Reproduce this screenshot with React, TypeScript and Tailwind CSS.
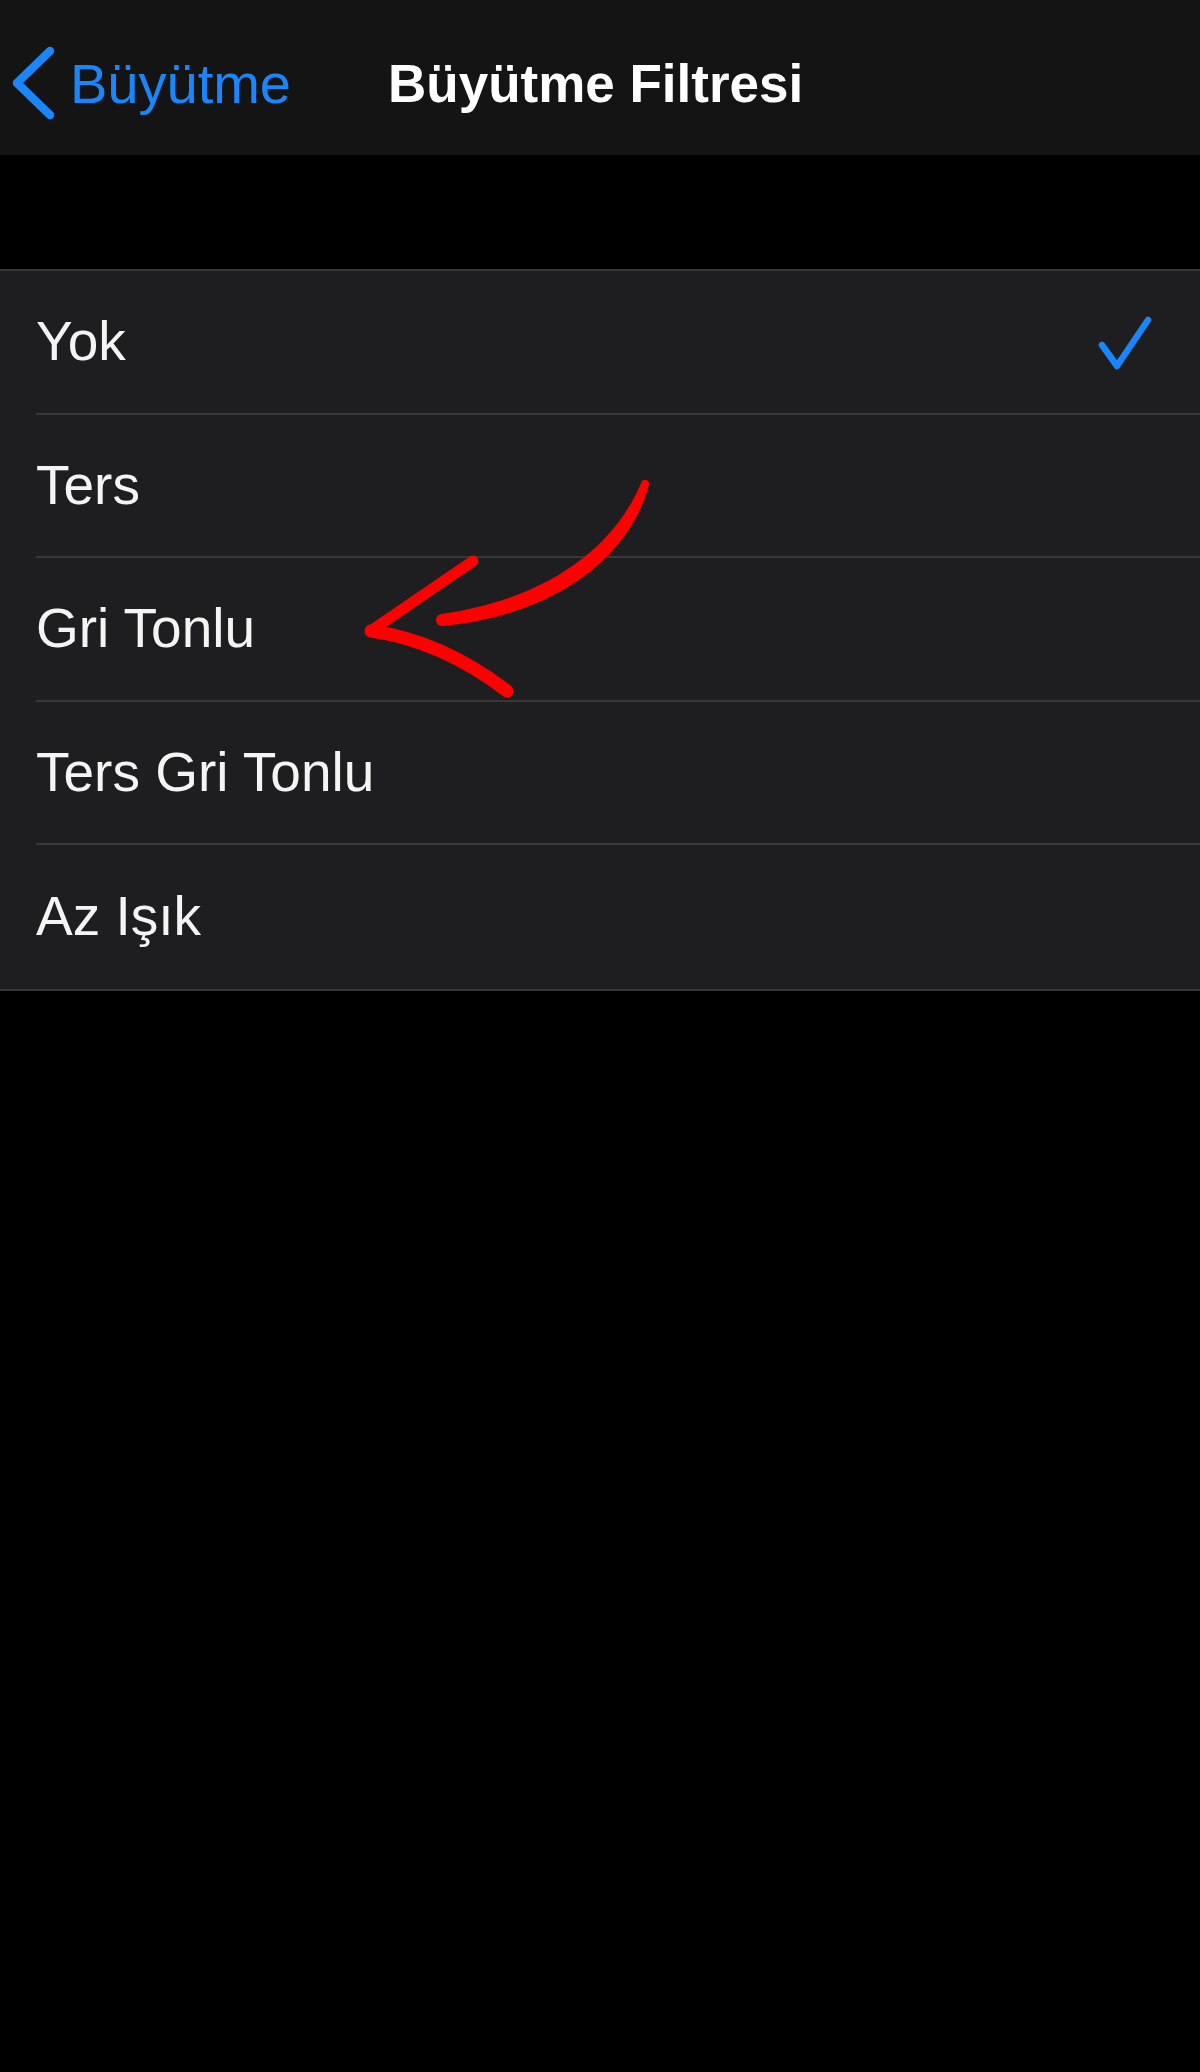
const options = ["Yok", "Ters", "Gri Tonlu", "Ters Gri Tonlu", "Az Işık"];

function RedArrow() {
  return (
    <svg
      className="absolute left-0 top-0 pointer-events-none"
      width="1200"
      height="1000"
      viewBox="0 0 1200 1000"
      fill="none"
    >
      {/* tapered shaft */}
      <path
        d="M641.2 482.8 C617.8 539.6, 556.8 597.6, 441.3 614 L442.7 626 C563.2 614.4, 632.2 550.4, 648.8 485.2 Z"
        fill="#ff0000"
      />
      <circle cx="645" cy="484" r="4" fill="#ff0000" />
      <circle cx="442" cy="620" r="6" fill="#ff0000" />
      <path d="M473 561 L372 630" stroke="#ff0000" strokeWidth="11" strokeLinecap="round" />
      <path d="M371 631 Q442 641 507 691" stroke="#ff0000" strokeWidth="13" strokeLinecap="round" />
    </svg>
  );
}

export default function App() {
  return (
    <div
      className="relative w-[1200px] h-[2072px] bg-black"
      style={{ fontFamily: '"Liberation Sans", Arial, sans-serif' }}
    >
      <header className="relative h-[155px] bg-[#141414] flex items-center pt-[12px]">
        <div className="flex items-center text-[#1a86fb]">
          <svg width="60" height="80" viewBox="0 0 60 80" className="ml-[3px] mt-[-2px]">
            <path
              d="M47 8 L14 40 L47 72"
              stroke="#1a86fb"
              strokeWidth="8.5"
              strokeLinecap="round"
              strokeLinejoin="round"
              fill="none"
            />
          </svg>
          <span className="ml-[7px] text-[56px] leading-none">Büyütme</span>
        </div>
        <h1 className="absolute left-[388px] text-[53px] font-bold leading-none text-white">
          Büyütme Filtresi
        </h1>
      </header>

      <div className="h-[114px]" />

      <ul className="bg-[#1e1e20] border-t-2 border-b-2 border-[#38383a]">
        {options.map((label, i) => (
          <li key={label} className="pl-[36px]">
            <div
              className={`h-[143.5px] flex items-center justify-between pr-[50px] ${
                i < options.length - 1 ? "border-b-2 border-[#38383a]" : ""
              }`}
            >
              <span className="text-[55px] text-[#f4f4f4] leading-none">{label}</span>
              {i === 0 && (
                <svg width="60" height="60" viewBox="0 0 60 60" className="mr-[-4px] mt-[4px]">
                  <path
                    d="M8 31 L23 52 L54 6"
                    stroke="#1a86fb"
                    strokeWidth="6.5"
                    strokeLinecap="round"
                    strokeLinejoin="round"
                    fill="none"
                  />
                </svg>
              )}
            </div>
          </li>
        ))}
      </ul>

      <RedArrow />
    </div>
  );
}
